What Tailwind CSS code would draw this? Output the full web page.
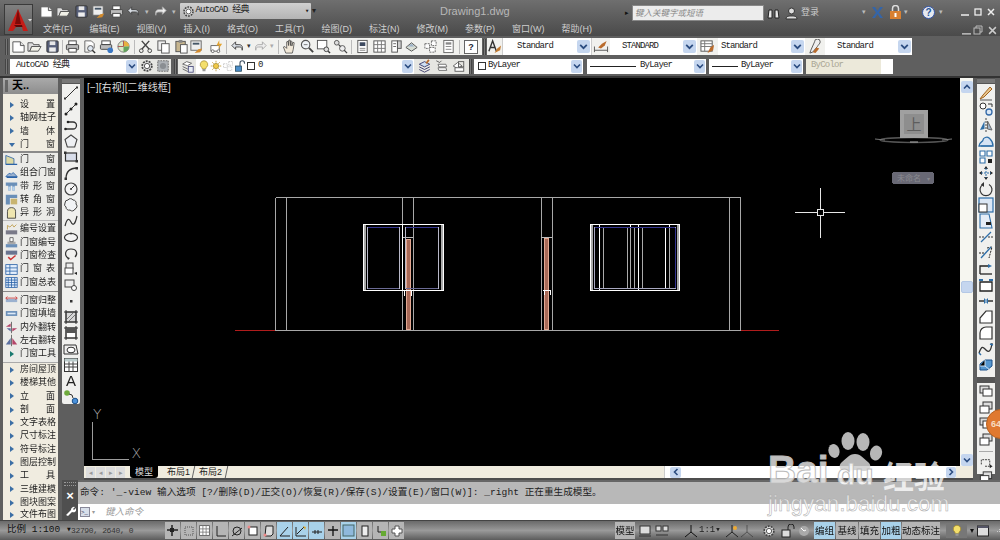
<!DOCTYPE html>
<html><head><meta charset="utf-8"><script src="https://cdn.jsdelivr.net/npm/@tailwindcss/browser@4"></script></head>
<body class="relative w-[1000px] h-[540px] overflow-hidden bg-[#5a5a5a] blur-[.45px] [font-family:'Liberation_Sans','Noto_Sans_CJK_SC',sans-serif]">
<svg class="hidden">
<defs>
<symbol id="new" viewBox="0 0 16 16"><path d="M2 3h8l4 4v7H2z" fill="#fff" stroke="#555"/><path d="M10 3v4h4" fill="#ddd" stroke="#555"/></symbol>
<symbol id="open" viewBox="0 0 16 16"><path d="M1 4h5l1 2h6v2H5l-2 5H1z" fill="#ddd" stroke="#555"/><path d="M5 8h10l-3 5H3z" fill="#f1f1e8" stroke="#555"/></symbol>
<symbol id="save" viewBox="0 0 16 16"><rect x="2" y="2" width="12" height="12" rx="1" fill="#58607a" stroke="#333"/><rect x="5" y="2.500" width="6" height="4" fill="#e8e8e8"/><rect x="4.500" y="9" width="7" height="4.500" fill="#eee"/></symbol>
<symbol id="print" viewBox="0 0 16 16"><rect x="4" y="2" width="8" height="4" fill="#fff" stroke="#444"/><rect x="1.500" y="6" width="13" height="5.500" rx="1" fill="#bbb" stroke="#444"/><rect x="4" y="10" width="8" height="4" fill="#fff" stroke="#444"/></symbol>
<symbol id="preview" viewBox="0 0 16 16"><path d="M3 2h7l3 3v5" fill="#fff" stroke="#666"/><path d="M3 2v12h5" fill="none" stroke="#666"/><circle cx="9" cy="10" r="3" fill="#dfe8f2" stroke="#555"/><path d="M11 12l3 3" stroke="#333" stroke-width="1.500"/></symbol>
<symbol id="publish" viewBox="0 0 16 16"><rect x="3" y="2" width="9" height="4" fill="#fff" stroke="#444"/><rect x="1.500" y="6" width="12" height="5" rx="1" fill="#bbb" stroke="#444"/><circle cx="12" cy="12" r="3" fill="#3b78c4"/></symbol>
<symbol id="d3" viewBox="0 0 16 16"><circle cx="8" cy="8" r="6" fill="#d9e8c8" stroke="#777"/><path d="M8 2a6 6 0 0 1 6 6H8z" fill="#e8b040"/><path d="M8 8h6a6 6 0 0 1-6 6z" fill="#63a35d"/><path d="M2 8h6V2" fill="none" stroke="#a55"/></symbol>
<symbol id="cut" viewBox="0 0 16 16"><path d="M4 2l8 9M12 2l-8 9" stroke="#444" stroke-width="1.500"/><circle cx="3.500" cy="12.500" r="2" fill="none" stroke="#444"/><circle cx="12.500" cy="12.500" r="2" fill="none" stroke="#444"/></symbol>
<symbol id="copy" viewBox="0 0 16 16"><rect x="2" y="2" width="8" height="10" fill="#eee" stroke="#555"/><rect x="6" y="5" width="8" height="10" fill="#fff" stroke="#555"/></symbol>
<symbol id="paste" viewBox="0 0 16 16"><rect x="2" y="2.500" width="10" height="11" fill="#c6b58e" stroke="#555"/><rect x="5" y="1" width="4" height="3" fill="#888"/><rect x="7" y="6" width="7" height="9" fill="#fff" stroke="#555"/></symbol>
<symbol id="brush" viewBox="0 0 16 16"><rect x="2" y="2" width="11" height="10" fill="#eee" stroke="#666"/><rect x="4" y="4" width="7" height="2" fill="#456"/><path d="M6 15l4-4 4-1-2 4z" fill="#d28a2c"/></symbol>
<symbol id="block" viewBox="0 0 16 16"><path d="M2 7h9v6H2z" fill="#fff" stroke="#666"/><circle cx="4" cy="13" r="1.500" fill="#fff" stroke="#666"/><circle cx="10" cy="13" r="1.500" fill="#fff" stroke="#666"/><path d="M11 1l-3 6h3l-1 4 4-6h-3z" fill="#e3a32e"/></symbol>
<symbol id="undo" viewBox="0 0 16 16"><path d="M6 3L2 7l4 4V8.500h4c2 0 3 1 3 3.500 1-4-.5-6-3.500-6H6z" fill="#d8dde4" stroke="#444"/></symbol>
<symbol id="redo" viewBox="0 0 16 16"><path d="M10 3l4 4-4 4V8.500H6c-2 0-3 1-3 3.500-1-4 .5-6 3.500-6H10z" fill="#eee" stroke="#aaa"/></symbol>
<symbol id="pan" viewBox="0 0 16 16"><path d="M4 15L1.500 8.500 3 8l2 2V3l1.500-.5L7 7V1.500L8.500 1 9 7V2l1.500.5V7.500l1-4 1.500.5-1 7-1 4z" fill="#f1e8d8" stroke="#444" stroke-width=".8"/></symbol>
<symbol id="zoom" viewBox="0 0 16 16"><circle cx="6" cy="6" r="4.500" fill="#eef2f6" stroke="#555" stroke-width="1.200"/><path d="M9.500 9.500l4.500 4.500" stroke="#444" stroke-width="2"/><path d="M4 6h4" stroke="#777"/></symbol>
<symbol id="zoomw" viewBox="0 0 16 16"><rect x="1.500" y="1.500" width="10" height="9" fill="#fff" stroke="#555"/><circle cx="11" cy="11" r="2.500" fill="#ddd" stroke="#444"/><path d="M13 13l2 2" stroke="#333" stroke-width="1.500"/></symbol>
<symbol id="zoomp" viewBox="0 0 16 16"><circle cx="4" cy="4" r="2.500" fill="#ddd" stroke="#555"/><circle cx="10" cy="10" r="3" fill="#eee" stroke="#555"/><path d="M6 6l2 2M12 12l3 3" stroke="#444" stroke-width="1.300"/></symbol>
<symbol id="props" viewBox="0 0 16 16"><rect x="3" y="1.500" width="10" height="13" fill="#fff" stroke="#555"/><rect x="5" y="3.500" width="6" height="4" fill="#3e4a60"/><path d="M5 10h6M5 12h6" stroke="#888"/></symbol>
<symbol id="grid" viewBox="0 0 16 16"><rect x="2" y="2" width="12" height="12" fill="#fff" stroke="#555"/><path d="M6 2v12M10 2v12M2 6h12M2 10h12" stroke="#777"/></symbol>
<symbol id="tool" viewBox="0 0 16 16"><rect x="3" y="2" width="6" height="12" fill="#fff" stroke="#555"/><rect x="9" y="2" width="4" height="8" fill="#ccc" stroke="#555"/><path d="M4.500 5h3M4.500 8h3" stroke="#666"/></symbol>
<symbol id="sheet" viewBox="0 0 16 16"><path d="M2 9l6-5 6 5-6 4z" fill="#d7ddd4" stroke="#555"/><path d="M4 8l4-3 3 3" fill="#9db2c8"/></symbol>
<symbol id="mark" viewBox="0 0 16 16"><rect x="2" y="5" width="5" height="5" fill="#fff" stroke="#666" stroke-dasharray="2 1"/><rect x="9" y="2" width="5" height="5" fill="#fff" stroke="#666" stroke-dasharray="2 1"/><rect x="7" y="9" width="6" height="5" fill="#fff" stroke="#666" stroke-dasharray="2 1"/></symbol>
<symbol id="calc" viewBox="0 0 16 16"><rect x="3" y="1.500" width="10" height="13" fill="#fff" stroke="#666"/><rect x="5" y="3.500" width="6" height="2.500" fill="#888"/><path d="M5 8h6M5 11h6" stroke="#888"/></symbol>
<symbol id="txtst" viewBox="0 0 16 16"><path d="M2 13L6 2l4 11M3.500 9h5" fill="none" stroke="#333" stroke-width="1.500"/><path d="M8 15l3-5 4-3-1 5z" fill="#c47b30"/></symbol>
<symbol id="dimst" viewBox="0 0 16 16"><path d="M1 8v6M15 8v6M1 12h14" stroke="#555"/><path d="M5 9l4-4 5-3-2 5-4 3z" fill="#b96b2c"/></symbol>
<symbol id="tabst" viewBox="0 0 16 16"><rect x="1" y="2" width="12" height="11" fill="#fff" stroke="#555"/><path d="M1 5h12M1 8h12M5 2v11" stroke="#777"/><path d="M8 15l3-6 4-3-1 6z" fill="#b96b2c"/></symbol>
<symbol id="mlst" viewBox="0 0 16 16"><path d="M7 3a3 3 0 0 1 6 0c0 2-2 3-3 5l-5 6-3 1 1-3z" fill="#eee" stroke="#555"/><path d="M5 14l4-5 3 1-4 5z" fill="#b96b2c"/></symbol>
<symbol id="lay" viewBox="0 0 16 16"><path d="M2 5l5-3 6 2-5 3z" fill="#fff" stroke="#555"/><path d="M2 8l6 3 5-3M2 11l6 3 5-3" fill="none" stroke="#555"/><rect x="9" y="8" width="6" height="7" fill="#e8eef5" stroke="#447"/></symbol>
<symbol id="lay2" viewBox="0 0 16 16"><path d="M2 6l6-3 6 3-6 3z" fill="#cfe0f3" stroke="#336"/><path d="M2 9l6 3 6-3M2 12l6 3 6-3" fill="none" stroke="#336"/><path d="M10 5l3-4" stroke="#b96b2c" stroke-width="2"/></symbol>
<symbol id="lay3" viewBox="0 0 16 16"><path d="M2 2l4 2 2-2" fill="none" stroke="#555"/><path d="M4 6h9l1 3H5zM4 10h9l1 3H5z" fill="#fff" stroke="#666"/></symbol>
<symbol id="lay4" viewBox="0 0 16 16"><path d="M2 8l5-4 5 4-5 3z" fill="#fff" stroke="#555"/><rect x="8" y="3" width="6" height="6" fill="none" stroke="#555"/><rect x="4" y="10" width="10" height="4" fill="#fff" stroke="#555"/></symbol>
<symbol id="gear" viewBox="0 0 16 16"><circle cx="8" cy="8" r="5.500" fill="#ddd" stroke="#444" stroke-width="2" stroke-dasharray="2.200 1.200"/><circle cx="8" cy="8" r="3" fill="#fff" stroke="#444"/></symbol>
<symbol id="gear2" viewBox="0 0 16 16"><rect x="2" y="2" width="12" height="12" fill="#aeb2b6" stroke="#666" stroke-dasharray="2 1"/><circle cx="8" cy="8" r="3.500" fill="#8a8e92"/></symbol>
<symbol id="bulb" viewBox="0 0 16 16"><path d="M8 1a5 5 0 0 1 3 9l-1 2H6l-1-2a5 5 0 0 1 3-9z" fill="#f4df6c" stroke="#a68c2c"/><rect x="6" y="12" width="4" height="3" fill="#999"/></symbol>
<symbol id="sun" viewBox="0 0 16 16"><circle cx="8" cy="8" r="3.500" fill="#f2c845" stroke="#a68c2c"/><path d="M8 1v2.500M8 12.500V15M1 8h2.500M12.500 8H15M3 3l2 2M11 11l2 2M13 3l-2 2M5 11l-2 2" stroke="#b98f20"/></symbol>
<symbol id="lock" viewBox="0 0 16 16"><rect x="2" y="8" width="8" height="7" fill="#4d8ec9" stroke="#245"/><path d="M8 8V4a3 3 0 0 1 6 0v1" fill="none" stroke="#456" stroke-width="1.500"/></symbol>
<symbol id="dn" viewBox="0 0 10 10"><path d="M2 3.500L5 6.500 8 3.500" fill="none" stroke="#2b4c80" stroke-width="1.600"/></symbol>
<symbol id="ln" viewBox="0 0 16 16"><path d="M2 14L14 2" stroke="#333"/><rect x="1" y="12.500" width="2" height="2" fill="#333"/><rect x="13" y="1.500" width="2" height="2" fill="#333"/></symbol>
<symbol id="ln2" viewBox="0 0 16 16"><path d="M2 14L14 2" stroke="#333"/><circle cx="3" cy="13" r="1.500" fill="#222"/><circle cx="8" cy="8" r="1.500" fill="#222"/><circle cx="13" cy="3" r="1.500" fill="#222"/></symbol>
<symbol id="pl" viewBox="0 0 16 16"><path d="M2 12h8a3 3 0 0 0 0-7H5" fill="none" stroke="#333" stroke-width="1.300"/><circle cx="2.500" cy="12" r="1.300" fill="#222"/><circle cx="5" cy="5" r="1.300" fill="#222"/></symbol>
<symbol id="pg" viewBox="0 0 16 16"><path d="M8 2l6 4.500-2.300 7.500H4.300L2 6.500z" fill="#eef0f3" stroke="#444" stroke-width="1.100"/></symbol>
<symbol id="rc" viewBox="0 0 16 16"><rect x="2.500" y="4" width="11" height="8" fill="#d9deea" stroke="#333" stroke-width="1.200"/><rect x="1" y="2.500" width="2.500" height="2.500" fill="#333"/><rect x="12.500" y="11" width="2.500" height="2.500" fill="#333"/></symbol>
<symbol id="ar" viewBox="0 0 16 16"><path d="M3 14C3 7 7 3 14 3" fill="none" stroke="#333" stroke-width="1.300"/><rect x="1.500" y="12.500" width="2.500" height="2.500" fill="#333"/><rect x="12.500" y="2" width="2.500" height="2.500" fill="#333"/></symbol>
<symbol id="ci" viewBox="0 0 16 16"><circle cx="8" cy="8" r="6" fill="#f3f3f3" stroke="#444" stroke-width="1.200"/><path d="M8 8l3.500-3.500" stroke="#333"/><circle cx="8" cy="8" r="1" fill="#333"/></symbol>
<symbol id="cl" viewBox="0 0 16 16"><path d="M5 3a3 3 0 0 1 5 0 3 3 0 0 1 3 4 3 3 0 0 1-1 5 3 3 0 0 1-5 1 3 3 0 0 1-4-3 3 3 0 0 1-1-4 3 3 0 0 1 3-3z" fill="#f1f3f5" stroke="#444"/></symbol>
<symbol id="sp" viewBox="0 0 16 16"><path d="M2 13C4 5 6 5 8 9s4 3 6-6" fill="none" stroke="#333" stroke-width="1.200"/></symbol>
<symbol id="el" viewBox="0 0 16 16"><ellipse cx="8" cy="8.500" rx="6.500" ry="4" fill="#f4f4f4" stroke="#333" stroke-width="1.200"/><circle cx="8" cy="4.500" r="1" fill="#333"/></symbol>
<symbol id="ea" viewBox="0 0 16 16"><path d="M5 13C1 10 2 4 8 4s7 5 4 8" fill="none" stroke="#333" stroke-width="1.200"/><path d="M4 12l3 1-2 2" fill="#333"/></symbol>
<symbol id="ib" viewBox="0 0 16 16"><rect x="3" y="2" width="7" height="6" fill="#eee" stroke="#444"/><rect x="2" y="7" width="8" height="6" fill="#fff" stroke="#444"/><path d="M11 12l3 2v-3z" fill="#222"/></symbol>
<symbol id="mk" viewBox="0 0 16 16"><rect x="2" y="3" width="9" height="7" fill="#eee" stroke="#444"/><circle cx="11" cy="11" r="2.500" fill="#fff" stroke="#444"/></symbol>
<symbol id="pt" viewBox="0 0 16 16"><rect x="7" y="7" width="2.500" height="2.500" fill="#333"/></symbol>
<symbol id="ht" viewBox="0 0 16 16"><rect x="3" y="3" width="10" height="10" fill="#d7d7d7" stroke="#333"/><path d="M1 3h14M1 13h14M3 1v14M13 1v14" stroke="#333"/><path d="M4 10l6-6M6 12l6-6" stroke="#777"/></symbol>
<symbol id="gr" viewBox="0 0 16 16"><rect x="3" y="3" width="10" height="10" fill="#fff" stroke="#333"/><path d="M1 3h14M1 13h14M3 1v14M13 1v14" stroke="#333"/><rect x="3" y="3" width="10" height="5" fill="#555"/></symbol>
<symbol id="rg" viewBox="0 0 16 16"><path d="M1 4h12l2 9H1z" fill="#eee" stroke="#333"/><ellipse cx="8" cy="9" rx="4" ry="2.800" fill="#fff" stroke="#333"/></symbol>
<symbol id="tb" viewBox="0 0 16 16"><rect x="1.500" y="1.500" width="13" height="13" fill="#fff" stroke="#333"/><rect x="1.500" y="1.500" width="13" height="3" fill="#bcc"/><path d="M1.500 7h13M1.500 10h13M6 4.500v10M10 4.500v10" stroke="#444"/></symbol>
<symbol id="mo" viewBox="0 0 16 16"><circle cx="4" cy="4" r="2.800" fill="#6eaa3c"/><circle cx="12" cy="12" r="2.800" fill="#4a90d9" stroke="#1b4f88"/><path d="M6 5l3 1 1 3" fill="none" stroke="#333"/></symbol>
<symbol id="er" viewBox="0 0 16 16"><path d="M2 14l3-4 7-8 2 2-8 8z" fill="#e8c58d" stroke="#a2641f"/><path d="M2 15h12" stroke="#555"/></symbol>
<symbol id="co" viewBox="0 0 16 16"><circle cx="5" cy="5" r="3" fill="#fff" stroke="#333"/><circle cx="11" cy="11" r="3" fill="#dbe7f5" stroke="#3469a8" stroke-width="1.300"/><path d="M10 3h4v3" fill="none" stroke="#333"/></symbol>
<symbol id="mi" viewBox="0 0 16 16"><path d="M8 1v14" stroke="#444" stroke-dasharray="2 1"/><path d="M6.500 4v8L2 13z" fill="#2e6ea8"/><path d="M9.500 4v8l4.500 1z" fill="#9fb4ca" stroke="#666"/></symbol>
<symbol id="of" viewBox="0 0 16 16"><path d="M1 13c0-4 4-4 4-6s4-4 6-2 4 3 4 8z" fill="#d5e3f4" stroke="#2e6ea8" stroke-width="1.300"/><path d="M3 13h11" stroke="#2e6ea8"/></symbol>
<symbol id="ar2" viewBox="0 0 16 16"><path d="M2 2h5v5H2zM9 2h5v5H9zM2 9h5v5H2z" fill="#fff" stroke="#2e6ea8" stroke-width="1.100"/><rect x="10" y="10" width="4" height="4" fill="#222"/></symbol>
<symbol id="mv" viewBox="0 0 16 16"><path d="M8 1l2 3H6zM8 15l2-3H6zM1 8l3-2v4zM15 8l-3-2v4z" fill="#222"/><path d="M8 3v10M3 8h10" stroke="#2e6ea8" stroke-dasharray="2 1"/></symbol>
<symbol id="ro" viewBox="0 0 16 16"><path d="M11 3.500A6 6 0 1 1 5 3.500" fill="none" stroke="#333" stroke-width="1.200"/><path d="M6 1v5L3 3.500z" fill="#333"/></symbol>
<symbol id="sc" viewBox="0 0 16 16"><rect x="1" y="1" width="14" height="14" fill="#dbe7f5" stroke="#2e6ea8" stroke-width="1.200"/><rect x="1" y="7" width="8" height="8" fill="#fff" stroke="#333"/></symbol>
<symbol id="st" viewBox="0 0 16 16"><path d="M2 1h9l3 14H2z" fill="#e5edf7" stroke="#2e6ea8" stroke-width="1.100"/><rect x="8" y="9" width="5" height="3" fill="#222"/></symbol>
<symbol id="tr" viewBox="0 0 16 16"><path d="M3 13L13 3" stroke="#2e6ea8" stroke-width="1.300"/><path d="M1 8h5M10 8h5" stroke="#333" stroke-dasharray="2 1"/></symbol>
<symbol id="ex" viewBox="0 0 16 16"><path d="M1 8h6M9 3l5-1-3 11" fill="none" stroke="#222" stroke-dasharray="2 1"/><path d="M3 13L13 2" stroke="#2e6ea8" stroke-width="1.300"/></symbol>
<symbol id="bk" viewBox="0 0 16 16"><path d="M2 13V5h9" fill="none" stroke="#222" stroke-width="1.300"/><path d="M2 13h12" stroke="#222" stroke-width="1.300"/><path d="M10 3l4 2-4 2z" fill="#2e6ea8"/></symbol>
<symbol id="bk2" viewBox="0 0 16 16"><path d="M2 5h12v9H2z" fill="#fff" stroke="#222" stroke-width="1.300"/><path d="M1 3h4M11 3h4" stroke="#2e6ea8" stroke-width="2"/></symbol>
<symbol id="jn" viewBox="0 0 16 16"><path d="M1 8h5M10 8h5" stroke="#333" stroke-width="1.500"/><path d="M6 5l3 3-3 3zM10 5L7 8l3 3z" fill="#2e6ea8"/></symbol>
<symbol id="cf" viewBox="0 0 16 16"><path d="M2 14V9l6-7h6v12z" fill="#fff" stroke="#333" stroke-width="1.200"/></symbol>
<symbol id="fl" viewBox="0 0 16 16"><path d="M2 14V8a6 6 0 0 1 6-6h6v12z" fill="#fff" stroke="#333" stroke-width="1.200"/></symbol>
<symbol id="bl" viewBox="0 0 16 16"><path d="M1 12c3-8 4-6 7-3s5 1 6-7" fill="none" stroke="#333" stroke-width="1.300"/><path d="M1 12l2 2M12 3l3 1" stroke="#2e6ea8" stroke-width="1.500"/></symbol>
<symbol id="bx" viewBox="0 0 16 16"><path d="M2 7l5-4h7v6l-5 4H2z" fill="#5596cf" stroke="#1b4f88"/><path d="M7 3v6H2M7 9l5 4" stroke="#cfe2f5"/></symbol>
<symbol id="dr1" viewBox="0 0 16 16"><rect x="2" y="2" width="9" height="7" fill="#ddd" stroke="#333"/><rect x="5" y="5" width="9" height="7" fill="#fff" stroke="#333"/></symbol>
<symbol id="dr2" viewBox="0 0 16 16"><rect x="5" y="2" width="9" height="7" fill="#ddd" stroke="#333"/><rect x="2" y="6" width="9" height="7" fill="#fff" stroke="#333"/></symbol>
<symbol id="abc" viewBox="0 0 16 16"><path d="M3 10V5h9v7h-5" fill="none" stroke="#333" stroke-dasharray="2 1"/><path d="M12 14l3-2-3-2z" fill="#222"/></symbol>
<symbol id="tri" viewBox="0 0 8 8"><path d="M2 1l4 3-4 3z" fill="#3b6ea5"/></symbol>
<symbol id="trg" viewBox="0 0 8 8"><path d="M2 1l4 3-4 3z" fill="#1a7a70"/></symbol>
<symbol id="dr" viewBox="0 0 16 16"><path d="M1 14V3l10 4v7z" fill="#ddd9a4" stroke="#2a62a8"/><path d="M1 14h14" stroke="#2a62a8" stroke-width="1.500"/></symbol>
<symbol id="dr3" viewBox="0 0 16 16"><path d="M1 13l4-4 3 1 2-2 5 5z" fill="#9bb1cf" stroke="#2a62a8"/><path d="M2 14h13" stroke="#2a62a8" stroke-width="1.500"/></symbol>
<symbol id="bar" viewBox="0 0 16 16"><path d="M1 3h14v4h-3v6H9V7H7v6H4V7H1z" fill="#6a8fb8"/><path d="M4 8h3v5H4zM9 8h3v5H9z" fill="#b8d3ec"/></symbol>
<symbol id="cor" viewBox="0 0 16 16"><path d="M1 2h14v4H6v8H1z" fill="#6a8fb8"/><path d="M7 7h8v7H7z" fill="#c8b470"/></symbol>
<symbol id="arc" viewBox="0 0 16 16"><path d="M3 15V7a5 5 0 0 1 10 0v8z" fill="#efe6b0" stroke="#333"/></symbol>
<symbol id="num" viewBox="0 0 16 16"><rect x="1" y="9" width="14" height="5" fill="#7a7a88"/><path d="M3 8V3l3 2 3-3 2 3 3-3" fill="none" stroke="#b94"/></symbol>
<symbol id="nu2" viewBox="0 0 16 16"><rect x="1" y="10" width="14" height="4" fill="#6a8fb8"/><rect x="3" y="7" width="10" height="3" fill="#aaa"/><path d="M6 2h4v5H6z" fill="#fff" stroke="#555"/></symbol>
<symbol id="chk" viewBox="0 0 16 16"><rect x="1" y="2" width="14" height="5" fill="#6a7590"/><path d="M4 10l3 3 6-5" fill="none" stroke="#c33" stroke-width="1.800"/></symbol>
<symbol id="tbb" viewBox="0 0 16 16"><rect x="1" y="2" width="14" height="12" fill="#e3eefb" stroke="#2a62a8"/><path d="M1 6h14M1 10h14M6 2v12" stroke="#2a62a8"/></symbol>
<symbol id="tbc" viewBox="0 0 16 16"><rect x="1" y="2" width="14" height="12" fill="#e3eefb" stroke="#2a62a8"/><path d="M1 5h14M1 8h14M1 11h14M4 2v12M8 2v12M12 2v12" stroke="#2a62a8"/></symbol>
<symbol id="fx" viewBox="0 0 16 16"><path d="M1 6h14v4H1z" fill="#9bb1cf"/><path d="M3 3L1 5l2 2M13 3l2 2-2 2M1 5h14" fill="none" stroke="#c33"/></symbol>
<symbol id="fl2" viewBox="0 0 16 16"><rect x="1" y="5" width="14" height="6" fill="#6a8fb8"/><rect x="3" y="7" width="10" height="2" fill="#dce9f7"/></symbol>
<symbol id="sw" viewBox="0 0 16 16"><path d="M8 1v14" stroke="#555"/><path d="M7 3L1 7h6zM9 9h6l-6 4z" fill="#b5476a"/><path d="M7 9H2l5 4z" fill="#5a6fa0"/></symbol>
<symbol id="sw2" viewBox="0 0 16 16"><path d="M8 1v14" stroke="#555"/><path d="M7 5l-6 8h6z" fill="#5a6fa0"/><path d="M9 5l6 8H9z" fill="#b5476a"/></symbol>
</defs>
</svg>

<!-- Title -->
<header class="h-[36px] bg-gradient-to-b from-[#6f6f6f] via-[#5c5c5c] to-[#4a4a4a] flex relative">
  <div class="w-[29px] h-[31px] ml-[4px] mt-[4px] bg-gradient-to-b from-[#808080] to-[#5c5c5c] border border-[#3a3a3a] flex items-center pl-[2px]">
    <svg class="w-[21px] h-[24px]" viewBox="0 0 21 24"><path d="M11 1L1 23h5l3-4h6l1 4h5z" fill="#c41d18"/><path d="M11 1l3 15H8z" fill="#7c0a08"/><path d="M7 17h8l.5 2H9z" fill="#5f0806"/></svg>
    <svg class="w-[4px] h-[4px]" viewBox="0 0 8 8"><path d="M0 2h8L4 7z" fill="#ddd"/></svg>
  </div>
  <div class="flex flex-col">
    <div class="h-[20px] flex items-center pt-[2px]">
      <div class="flex ml-[5.500px] gap-[2.500px]">
        <svg class="w-[15px] h-[15px]"><use href="#new"/></svg><svg class="w-[15px] h-[15px]"><use href="#open"/></svg><svg class="w-[15px] h-[15px]"><use href="#save"/></svg><svg class="w-[15px] h-[15px]"><use href="#brush"/></svg><svg class="w-[15px] h-[15px]"><use href="#print"/></svg><svg class="w-[15px] h-[15px]"><use href="#undo"/></svg>
        <span class="text-[7px] text-[#bbb] leading-[15px] w-[7px] text-center">▾</span><svg class="w-[15px] h-[15px]"><use href="#redo"/></svg><span class="text-[7px] text-[#bbb] leading-[15px] w-[7px] text-center">▾</span>
      </div>
      <div class="w-[131px] h-[16px] ml-[2px] bg-gradient-to-b from-[#d0d0d0] to-[#b4b4b4] rounded-[1px] flex items-center pl-[2px] [font-family:'Liberation_Mono','Noto_Sans_CJK_SC',monospace] text-[9px] tracking-[-.8px] text-[#222] whitespace-nowrap">
        <svg class="w-[13px] h-[13px] mr-[1px]"><use href="#gear"/></svg><span>AutoCAD 经典</span><span class="ml-auto mr-[2px] text-[7px]">▾</span>
      </div>
      <span class="text-[8px] text-[#222] ml-[1px]">▾</span>
    </div>
    <nav class="h-[16px] pt-[3px] flex items-center gap-[17px] ml-[10px] text-[9px] text-[#cfcfcf] whitespace-nowrap">
      <span>文件(F)</span><span>编辑(E)</span><span>视图(V)</span><span>插入(I)</span><span>格式(O)</span><span>工具(T)</span><span>绘图(D)</span><span>标注(N)</span><span>修改(M)</span><span>参数(P)</span><span>窗口(W)</span><span>帮助(H)</span>
    </nav>
  </div>
  <span class="absolute left-[440px] top-[3px] text-[11px] text-[#b8b8b8]">Drawing1.dwg</span>
  <div class="absolute left-[625px] top-[5px] h-[16px] flex items-center text-[9px]">
    <span class="text-[7px] text-[#111] w-[7px]">▸</span>
    <div class="w-[132px] h-[16px] bg-[#ececec] border border-[#888] pl-[2px] text-[8.500px] leading-[14px] italic text-[#888]">键入关键字或短语</div>
    <svg class="w-[13px] h-[13px] ml-[3px]" viewBox="0 0 13 13"><path d="M2 3h3v8H1zM8 3h3l1 8H8z" fill="#e8e8e8" stroke="#222"/></svg>
    <svg class="w-[13px] h-[13px] ml-[5px]" viewBox="0 0 13 13"><circle cx="6.500" cy="4" r="3" fill="#ddd" stroke="#333"/><path d="M1 12c0-3 3-3 5.500-3s5.500 0 5.500 3z" fill="#ddd" stroke="#333"/></svg>
    <span class="ml-[3px] text-[#ccc]">登录</span>
  </div>
  <div class="absolute left-[862px] top-[4px] h-[16px] flex items-center">
    <span class="text-[7px] text-[#bbb] mr-[5px]">▾</span>
    <svg class="w-[13px] h-[13px]" viewBox="0 0 13 13"><path d="M1 1h3l2.500 4L9 1h3L8 6.500l4 5.500H9L6.500 8 4 12H1l4-5.500z" fill="#3465a8"/></svg>
    <svg class="w-[13px] h-[14px] ml-[5px]" viewBox="0 0 13 14"><rect x="1" y="6" width="11" height="8" fill="#d88032"/><path d="M3.500 6V3.500a3 3 0 0 1 6 0V6" fill="none" stroke="#ddd" stroke-width="1.500"/><path d="M6.500 8v4" stroke="#fff" stroke-width="2"/></svg>
    <span class="text-[7px] text-[#bbb] ml-[2px]">▾</span>
    <svg class="w-[13px] h-[13px] ml-[14px]" viewBox="0 0 13 13"><circle cx="6.500" cy="6.500" r="6" fill="#e6e9ef" stroke="#35a"/><text x="6.500" y="10" text-anchor="middle" font-size="10" font-weight="700" fill="#24579c">?</text></svg>
    <span class="text-[7px] text-[#bbb] ml-[4px]">▾</span>
    <svg class="w-[8px] h-[8px] ml-[18px]" viewBox="0 0 8 8"><path d="M0 7h8" stroke="#eee" stroke-width="1.500"/></svg>
    <svg class="w-[8px] h-[8px] ml-[5px]" viewBox="0 0 8 8"><rect x="1" y="1" width="6" height="6" fill="none" stroke="#eee" stroke-width="1.300"/></svg>
    <svg class="w-[8px] h-[8px] ml-[5px]" viewBox="0 0 8 8"><path d="M1 1l6 6M7 1L1 7" stroke="#eee" stroke-width="1.500"/></svg>
  </div>
  <div class="absolute left-[962px] top-[25px] h-[10px] flex items-center gap-[2px]">
    <svg class="w-[9px] h-[9px]" viewBox="0 0 8 8"><path d="M0 7h8" stroke="#ccc" stroke-width="1.200"/></svg>
    <svg class="w-[10px] h-[10px]" viewBox="0 0 10 10"><rect x="1" y="3" width="6" height="6" fill="none" stroke="#bbb"/><path d="M3 3V1h6v6H7" fill="none" stroke="#bbb"/></svg>
    <svg class="w-[9px] h-[9px] ml-[3px]" viewBox="0 0 8 8"><path d="M1 1l6 6M7 1L1 7" stroke="#ccc" stroke-width="1.300"/></svg>
  </div>
</header>

<!-- Toolbars -->
<section class="h-[42px] bg-[#5f5f5f] flex flex-col">
  <div class="h-[21px] flex items-center pl-[5px]">
    <i class="w-[3px] h-[16px] bg-[#777] border-x border-[#444] mr-[2px]"></i>
    <div class="w-[472px] h-[17px] bg-[#f1f1ee] flex items-center pl-[1px]">
      <svg class="w-[15px] h-[15px]"><use href="#new"/></svg><svg class="w-[15px] h-[15px] ml-[1px]"><use href="#open"/></svg><svg class="w-[15px] h-[15px] ml-[3px]"><use href="#save"/></svg>
      <i class="w-px h-[14px] bg-[#bbb] ml-[2px] mr-[2px]"></i>
      <svg class="w-[15px] h-[15px]"><use href="#print"/></svg><svg class="w-[15px] h-[15px] ml-[2px]"><use href="#preview"/></svg><svg class="w-[15px] h-[15px] ml-[2px]"><use href="#publish"/></svg><svg class="w-[15px] h-[15px] ml-[2px]"><use href="#d3"/></svg>
      <i class="w-px h-[14px] bg-[#bbb] ml-[3px] mr-[3px]"></i>
      <svg class="w-[15px] h-[15px]"><use href="#cut"/></svg><svg class="w-[15px] h-[15px] ml-[3px]"><use href="#copy"/></svg><svg class="w-[15px] h-[15px] ml-[3px]"><use href="#paste"/></svg><svg class="w-[15px] h-[15px]"><use href="#brush"/></svg><svg class="w-[15px] h-[15px] ml-[5px]"><use href="#block"/></svg>
      <i class="w-px h-[14px] bg-[#bbb] ml-[2px] mr-[3px]"></i>
      <svg class="w-[15px] h-[15px]"><use href="#undo"/></svg><span class="text-[7px] text-[#333] w-[8px] text-center">▾</span><svg class="w-[15px] h-[15px]"><use href="#redo"/></svg><span class="text-[7px] text-[#aaa] w-[8px] text-center">▾</span>
      <i class="w-px h-[14px] bg-[#bbb] ml-[2px] mr-[3px]"></i>
      <svg class="w-[15px] h-[15px]"><use href="#pan"/></svg><svg class="w-[15px] h-[15px] ml-[3px]"><use href="#zoom"/></svg><svg class="w-[15px] h-[15px] ml-[1px]"><use href="#zoomw"/></svg><svg class="w-[15px] h-[15px] ml-[2px]"><use href="#zoomp"/></svg>
      <i class="w-px h-[14px] bg-[#bbb] ml-[3px] mr-[3px]"></i>
      <svg class="w-[15px] h-[15px]"><use href="#props"/></svg><svg class="w-[15px] h-[15px] ml-[2px]"><use href="#grid"/></svg><svg class="w-[15px] h-[15px] ml-[2px]"><use href="#tool"/></svg><svg class="w-[15px] h-[15px]"><use href="#sheet"/></svg><svg class="w-[15px] h-[15px] ml-[4px]"><use href="#mark"/></svg><svg class="w-[15px] h-[15px] ml-[3px]"><use href="#calc"/></svg>
      <i class="w-px h-[14px] bg-[#bbb] ml-[3px] mr-[4px]"></i>
      <span class="relative w-[14px] h-[14px] bg-white border border-[#666] text-center text-[9px] leading-[12px] font-bold text-[#223]">?</span>
    </div>
    <i class="w-[3px] h-[16px] bg-[#777] border-x border-[#444] mx-[1px]"></i>
    <div class="h-[17px] flex items-center bg-[#f1f1ee] [font-family:'Liberation_Mono',monospace] text-[9px] tracking-[-.9px] text-[#222]">
      <svg class="w-[15px] h-[15px]"><use href="#txtst"/></svg>
      <div class="w-[90px] h-[17px] bg-white border-x border-[#ccc] flex items-center pl-[14px]"><span>Standard</span><i class="ml-auto mr-[1px] w-[13px] h-[13px] bg-[#c5d6ef] rounded-[2px] flex items-center justify-center"><svg class="w-[11px] h-[11px]"><use href="#dn"/></svg></i></div>
      <i class="w-[18px] h-[17px] flex items-center justify-center"><svg class="w-[16px] h-[15px]"><use href="#dimst"/></svg></i>
      <div class="w-[87px] h-[17px] bg-white flex items-center pl-[12px]"><span>STANDARD</span><i class="ml-auto mr-[1px] w-[13px] h-[13px] bg-[#c5d6ef] rounded-[2px] flex items-center justify-center"><svg class="w-[11px] h-[11px]"><use href="#dn"/></svg></i></div>
      <i class="w-[21px] h-[17px] flex items-center justify-center"><svg class="w-[15px] h-[15px]"><use href="#tabst"/></svg></i>
      <div class="w-[87px] h-[17px] bg-white flex items-center pl-[3px]"><span>Standard</span><i class="ml-auto mr-[1px] w-[13px] h-[13px] bg-[#c5d6ef] rounded-[2px] flex items-center justify-center"><svg class="w-[11px] h-[11px]"><use href="#dn"/></svg></i></div>
      <i class="w-[20px] h-[17px] flex items-center justify-center"><svg class="w-[15px] h-[15px]"><use href="#mlst"/></svg></i>
      <div class="w-[87px] h-[17px] bg-white flex items-center pl-[12px]"><span>Standard</span><i class="ml-auto mr-[1px] w-[13px] h-[13px] bg-[#c5d6ef] rounded-[2px] flex items-center justify-center"><svg class="w-[11px] h-[11px]"><use href="#dn"/></svg></i></div>
    </div>
  </div>
  <div class="h-[18px] flex items-center pl-[5px] [font-family:'Liberation_Mono','Noto_Sans_CJK_SC',monospace] text-[9px] tracking-[-.8px] text-[#222]">
    <i class="w-[3px] h-[15px] bg-[#777] border-x border-[#444] mr-[2px]"></i>
    <div class="w-[128px] h-[15px] bg-white flex items-center pl-[6px]"><span>AutoCAD 经典</span><i class="ml-auto mr-[1px] w-[11px] h-[13px] bg-[#c5d6ef] rounded-[2px] flex items-center justify-center"><svg class="w-[10px] h-[10px]"><use href="#dn"/></svg></i></div>
    <div class="w-[33px] h-[15px] bg-[#e6e6e2] flex items-center pl-[2px] gap-[2px]"><svg class="w-[14px] h-[14px]"><use href="#gear"/></svg><svg class="w-[14px] h-[14px]"><use href="#gear2"/></svg></div>
    <i class="w-[3px] h-[15px] bg-[#777] border-x border-[#444] ml-[3px] mr-[1px]"></i>
    <div class="w-[18px] h-[15px] bg-[#e6e6e2] flex items-center justify-center"><svg class="w-[13px] h-[13px]"><use href="#lay"/></svg></div>
    <div class="w-[218px] h-[15px] bg-white flex items-center pl-[2px]"><svg class="w-[12px] h-[12px]"><use href="#bulb"/></svg><svg class="w-[12px] h-[12px]"><use href="#sun"/></svg><svg class="w-[12px] h-[12px] opacity-40"><use href="#mark"/></svg><svg class="w-[12px] h-[12px]"><use href="#lock"/></svg><i class="w-[8px] h-[8px] border border-[#333] ml-[1px] mr-[3px]"></i><span>0</span><i class="ml-auto mr-[1px] w-[11px] h-[13px] bg-[#c5d6ef] rounded-[2px] flex items-center justify-center"><svg class="w-[10px] h-[10px]"><use href="#dn"/></svg></i></div>
    <div class="w-[55px] h-[15px] bg-[#e6e6e2] flex items-center pl-[3px] gap-[2px]"><svg class="w-[15px] h-[14px]"><use href="#lay2"/></svg><svg class="w-[15px] h-[14px]"><use href="#lay3"/></svg><svg class="w-[15px] h-[14px]"><use href="#lay4"/></svg></div>
    <i class="w-[3px] h-[15px] bg-[#777] border-x border-[#444] mr-[1px]"></i>
    <div class="w-[109px] h-[15px] bg-white flex items-center pl-[4px] ml-[1px]"><i class="w-[8px] h-[8px] border border-[#333] mr-[2px]"></i><span>ByLayer</span><i class="ml-auto mr-[1px] w-[11px] h-[13px] bg-[#c5d6ef] rounded-[2px] flex items-center justify-center"><svg class="w-[10px] h-[10px]"><use href="#dn"/></svg></i></div>
    <i class="w-[4px]"></i>
    <div class="w-[119px] h-[15px] bg-white flex items-center pl-[3px]"><i class="w-[46px] h-px bg-[#222] mr-[4px]"></i><span>ByLayer</span><i class="ml-auto mr-[1px] w-[11px] h-[13px] bg-[#c5d6ef] rounded-[2px] flex items-center justify-center"><svg class="w-[10px] h-[10px]"><use href="#dn"/></svg></i></div>
    <i class="w-[3px]"></i>
    <div class="w-[94px] h-[15px] bg-white flex items-center pl-[3px]"><i class="w-[26px] h-px bg-[#222] mr-[3px]"></i><span>ByLayer</span><i class="ml-auto mr-[1px] w-[11px] h-[13px] bg-[#c5d6ef] rounded-[2px] flex items-center justify-center"><svg class="w-[10px] h-[10px]"><use href="#dn"/></svg></i></div>
    <i class="w-[3px]"></i>
    <div class="w-[87px] h-[15px] bg-[#ece9da] flex items-center pl-[5px] text-[#aaa695] border-r-[12px] border-white"><span>ByColor</span></div>
  </div>
  <div class="mt-auto h-[2px] bg-[#333]"></div>
</section>

<main class="h-[442px] flex">
  <!-- Palette -->
  <aside class="w-[62px] h-[442px] bg-[#5e5e5e] pl-[3px] pr-[4px] overflow-hidden text-[9px] whitespace-nowrap text-[#222] leading-[13.300px]">
    <div class="h-[16px] bg-gradient-to-b from-[#aaa] to-[#8d8d8d] font-bold text-[11px] text-black flex items-center pl-[2px]"><i class="w-[3px] h-[12px] bg-[#666] mr-[4px]"></i>天..</div>
    <div class="h-[57px] bg-[#f0ece0] pt-[4px]">
      <div class="flex items-center h-[13.300px]"><svg class="w-[8px] h-[8px] ml-[5px] mr-[4px]"><use href="#tri"/></svg><span class="flex-1 flex justify-between pr-[3px]"><span>设</span><span>置</span></span></div>
      <div class="flex items-center h-[13.300px]"><svg class="w-[8px] h-[8px] ml-[5px] mr-[4px]"><use href="#tri"/></svg><span>轴网柱子</span></div>
      <div class="flex items-center h-[13.300px]"><svg class="w-[8px] h-[8px] ml-[5px] mr-[4px]"><use href="#tri"/></svg><span class="flex-1 flex justify-between pr-[3px]"><span>墙</span><span>体</span></span></div>
      <div class="flex items-center h-[13.300px]"><svg class="w-[8px] h-[8px] ml-[5px] mr-[4px] rotate-90"><use href="#tri"/></svg><span class="flex-1 flex justify-between pr-[3px]"><span>门</span><span>窗</span></span></div>
    </div>
    <div class="h-[211px] bg-[#ebebe8] border-t-2 border-[#8a8a8a]">
      <div class="flex items-center h-[13.300px]"><svg class="w-[13px] h-[13px] ml-[2px] mr-[2px]"><use href="#dr"/></svg><span class="flex-1 flex justify-between pr-[3px]"><span>门</span><span>窗</span></span></div>
      <div class="flex items-center h-[13.300px]"><svg class="w-[13px] h-[13px] ml-[2px] mr-[2px]"><use href="#dr3"/></svg><span>组合门窗</span></div>
      <div class="flex items-center h-[13.300px]"><svg class="w-[13px] h-[13px] ml-[2px] mr-[2px]"><use href="#bar"/></svg><span class="flex-1 flex justify-between pr-[3px]"><span>带</span><span>形</span><span>窗</span></span></div>
      <div class="flex items-center h-[13.300px]"><svg class="w-[13px] h-[13px] ml-[2px] mr-[2px]"><use href="#cor"/></svg><span class="flex-1 flex justify-between pr-[3px]"><span>转</span><span>角</span><span>窗</span></span></div>
      <div class="flex items-center h-[13.300px]"><svg class="w-[13px] h-[13px] ml-[2px] mr-[2px]"><use href="#arc"/></svg><span class="flex-1 flex justify-between pr-[3px]"><span>异</span><span>形</span><span>洞</span></span></div>
      <div class="h-px bg-[#bbb] my-[1px]"></div>
      <div class="flex items-center h-[13.300px]"><svg class="w-[13px] h-[13px] ml-[2px] mr-[2px]"><use href="#num"/></svg><span>编号设置</span></div>
      <div class="flex items-center h-[13.300px]"><svg class="w-[13px] h-[13px] ml-[2px] mr-[2px]"><use href="#nu2"/></svg><span>门窗编号</span></div>
      <div class="flex items-center h-[13.300px]"><svg class="w-[13px] h-[13px] ml-[2px] mr-[2px]"><use href="#chk"/></svg><span>门窗检查</span></div>
      <div class="flex items-center h-[13.300px]"><svg class="w-[13px] h-[13px] ml-[2px] mr-[2px]"><use href="#tbb"/></svg><span class="flex-1 flex justify-between pr-[3px]"><span>门</span><span>窗</span><span>表</span></span></div>
      <div class="flex items-center h-[13.300px]"><svg class="w-[13px] h-[13px] ml-[2px] mr-[2px]"><use href="#tbc"/></svg><span>门窗总表</span></div>
      <div class="h-px bg-[#888] my-[2px]"></div>
      <div class="flex items-center h-[13.300px]"><svg class="w-[13px] h-[13px] ml-[2px] mr-[2px]"><use href="#fx"/></svg><span>门窗归整</span></div>
      <div class="flex items-center h-[13.300px]"><svg class="w-[13px] h-[13px] ml-[2px] mr-[2px]"><use href="#fl2"/></svg><span>门窗填墙</span></div>
      <div class="flex items-center h-[13.300px]"><svg class="w-[13px] h-[13px] ml-[2px] mr-[2px]"><use href="#sw"/></svg><span>内外翻转</span></div>
      <div class="flex items-center h-[13.300px]"><svg class="w-[13px] h-[13px] ml-[2px] mr-[2px]"><use href="#sw2"/></svg><span>左右翻转</span></div>
      <div class="flex items-center h-[13.300px]"><svg class="w-[8px] h-[8px] ml-[5px] mr-[4px]"><use href="#trg"/></svg><span>门窗工具</span></div>
    </div>
    <div class="h-[158px] bg-[#f0ece0] border-t border-[#aaa]">
      <div class="flex items-center h-[13.300px]"><svg class="w-[8px] h-[8px] ml-[5px] mr-[4px]"><use href="#tri"/></svg><span>房间屋顶</span></div>
      <div class="flex items-center h-[13.300px]"><svg class="w-[8px] h-[8px] ml-[5px] mr-[4px]"><use href="#tri"/></svg><span>楼梯其他</span></div>
      <div class="flex items-center h-[13.300px]"><svg class="w-[8px] h-[8px] ml-[5px] mr-[4px]"><use href="#tri"/></svg><span class="flex-1 flex justify-between pr-[3px]"><span>立</span><span>面</span></span></div>
      <div class="flex items-center h-[13.300px]"><svg class="w-[8px] h-[8px] ml-[5px] mr-[4px]"><use href="#tri"/></svg><span class="flex-1 flex justify-between pr-[3px]"><span>剖</span><span>面</span></span></div>
      <div class="flex items-center h-[13.300px]"><svg class="w-[8px] h-[8px] ml-[5px] mr-[4px]"><use href="#tri"/></svg><span>文字表格</span></div>
      <div class="flex items-center h-[13.300px]"><svg class="w-[8px] h-[8px] ml-[5px] mr-[4px]"><use href="#tri"/></svg><span>尺寸标注</span></div>
      <div class="flex items-center h-[13.300px]"><svg class="w-[8px] h-[8px] ml-[5px] mr-[4px]"><use href="#tri"/></svg><span>符号标注</span></div>
      <div class="flex items-center h-[13.300px]"><svg class="w-[8px] h-[8px] ml-[5px] mr-[4px]"><use href="#tri"/></svg><span>图层控制</span></div>
      <div class="flex items-center h-[13.300px]"><svg class="w-[8px] h-[8px] ml-[5px] mr-[4px]"><use href="#tri"/></svg><span class="flex-1 flex justify-between pr-[3px]"><span>工</span><span>具</span></span></div>
      <div class="flex items-center h-[13.300px]"><svg class="w-[8px] h-[8px] ml-[5px] mr-[4px]"><use href="#tri"/></svg><span>三维建模</span></div>
      <div class="flex items-center h-[13.300px]"><svg class="w-[8px] h-[8px] ml-[5px] mr-[4px]"><use href="#tri"/></svg><span>图块图案</span></div>
      <div class="flex items-center h-[11px] overflow-hidden"><svg class="w-[8px] h-[8px] ml-[5px] mr-[4px]"><use href="#tri"/></svg><span>文件布图</span></div>
    </div>
  </aside>

  <div class="w-[938px] flex flex-col">
    <div class="h-[402px] flex">
      <!-- left tools -->
      <div class="w-[22px] bg-[#5e5e5e]">
        <div class="w-[18px] h-[326px] bg-[#f0f0ee] rounded-b-[2px]">
          <div class="h-[6px] bg-[#777] border-y border-[#555]"></div>
          <div class="flex flex-col items-center pt-[1px]">
            <svg class="w-[16px] h-[16px]"><use href="#ln"/></svg><svg class="w-[16px] h-[16px]"><use href="#ln2"/></svg><svg class="w-[16px] h-[16px]"><use href="#pl"/></svg><svg class="w-[16px] h-[16px]"><use href="#pg"/></svg><svg class="w-[16px] h-[16px]"><use href="#rc"/></svg><svg class="w-[16px] h-[16px]"><use href="#ar"/></svg><svg class="w-[16px] h-[16px]"><use href="#ci"/></svg><svg class="w-[16px] h-[16px]"><use href="#cl"/></svg><svg class="w-[16px] h-[16px]"><use href="#sp"/></svg><svg class="w-[16px] h-[16px]"><use href="#el"/></svg><svg class="w-[16px] h-[16px]"><use href="#ea"/></svg><svg class="w-[16px] h-[16px]"><use href="#ib"/></svg><svg class="w-[16px] h-[16px]"><use href="#mk"/></svg><svg class="w-[16px] h-[16px]"><use href="#pt"/></svg><svg class="w-[16px] h-[16px]"><use href="#ht"/></svg><svg class="w-[16px] h-[16px]"><use href="#gr"/></svg><svg class="w-[16px] h-[16px]"><use href="#rg"/></svg><svg class="w-[16px] h-[16px]"><use href="#tb"/></svg>
            <span class="w-[16px] h-[16px] text-[15px] leading-[16px] text-center text-[#222]">A</span><svg class="w-[16px] h-[16px]"><use href="#mo"/></svg>
          </div>
        </div>
      </div>

      <!-- canvas + tabs -->
      <div class="w-[889px] flex flex-col">
        <div class="h-[388px] flex">
          <div class="w-[876px] h-[388px] bg-black relative">
            <svg class="w-[876px] h-[388px]" viewBox="84 78 876 388" shape-rendering="crispEdges">
              <g fill="none" stroke="#a8a8a8">
                <path d="M275.500 197.500h465M275.500 197.500v133M740.500 197.500v133M286.500 197.500v133M729.500 197.500v133M402.500 197.500v133M413.500 197.500v133M541.500 197.500v133M552.500 197.500v133M235 330.500h544"/>
              </g>
              <path d="M235 330.500h40M741 330.500h38" stroke="#b01c1c"/>
              <g stroke="#e2a892" fill="#a86a58"><rect x="406.500" y="239.500" width="4" height="90"/><rect x="544.500" y="238.500" width="4" height="91"/></g>
              <g fill="none" stroke="#bbb"><path d="M403 237.500h10M541 237.500h11"/></g>
              <path d="M365 225v65M442 225v65M592 225v65M678 225v65" stroke="#aaa" stroke-width="2"/>
              <g fill="none" stroke="#fff"><rect x="363.500" y="224.500" width="80" height="66"/><path d="M402.500 224.500v66M404.500 291v5M411.500 291v5M543 290.500h8M544 290v5M550 290v5"/></g>
              <g fill="none" stroke="#b8b8c8"><rect x="367.500" y="227.500" width="32" height="61"/><rect x="405.500" y="227.500" width="33" height="61"/></g>
              <path d="M368 227.500h31M406 227.500h32" stroke="#343490"/>
              <path d="M368 288.500h31M406 288.500h32" stroke="#6a6a94"/>
              <g fill="none" stroke="#fff"><rect x="590.500" y="224.500" width="89" height="66"/><path d="M599.500 224.500v66M638.500 224.500v66M630.500 224.500v3M669.500 224.500v3M665.500 227v61"/></g>
              <g fill="none" stroke="#aaa"><path d="M603.500 227v61M627.500 227v61M630.500 227v61M634.500 227v61M642.500 227v61M669.500 227v61"/></g>
              <rect x="594.500" y="227.500" width="81" height="61" fill="none" stroke="#a8a8c0"/>
              <path d="M595 227.500h80M675.500 228v60" stroke="#343490"/>
              <g stroke="#e6e6e6"><path d="M795 212.500h50M820.500 188v50"/><rect x="817.500" y="209.500" width="6" height="6" fill="#000"/></g>
              <path d="M92.500 422v37.500H129" fill="none" stroke="#9c9c9c"/>
              <text x="93" y="419" font-size="14" fill="#a8a8a8" font-family="DejaVu Sans" font-weight="200">Y</text>
              <text x="131.500" y="458" font-size="14" fill="#a8a8a8" font-family="DejaVu Sans" font-weight="200">X</text>
              <g shape-rendering="auto"><ellipse cx="914" cy="140" rx="34" ry="2.500" fill="none" stroke="#555" stroke-width="1.300"/><path d="M875 139l10 1M942 140l10-1" stroke="#777"/><path d="M910 142h8" stroke="#aaa"/></g>
              <rect x="900" y="110" width="28" height="28" fill="#a0a0a0"/>
              <rect x="904" y="114" width="20" height="20" fill="#8e8e8e"/>
              <text x="914" y="130" text-anchor="middle" font-size="15" fill="#5d5d5d" font-family="Noto Sans CJK SC">上</text>
              <rect x="892" y="172" width="42" height="12" rx="3" fill="#686874"/>
              <text x="909" y="181" text-anchor="middle" font-size="8" fill="#8a8a90" font-family="Noto Sans CJK SC">未命名</text>
              <text x="927" y="181" font-size="6" fill="#8a8a90">▾</text>
            </svg>
            <span class="absolute left-[3px] top-[4px] text-[10px] leading-[12px] tracking-[.1px] text-[#ddd]">[−][右视][二维线框]</span>
          </div>
          <div class="w-[13px] h-[388px] bg-[#f6f6f0] flex flex-col items-center pt-[3px]">
            <i class="w-[12px] h-[12px] bg-[#c5d6ef] rounded-[2px] flex items-center justify-center"><svg class="w-[10px] h-[10px] rotate-180"><use href="#dn"/></svg></i>
            <i class="w-[12px] h-[12px] bg-[#c5d6ef] rounded-[2px] mt-[188px] border border-[#b4c8e6]"></i>
            <i class="w-[12px] h-[12px] bg-[#c5d6ef] rounded-[2px] mt-[161px] flex items-center justify-center"><svg class="w-[10px] h-[10px]"><use href="#dn"/></svg></i>
          </div>
        </div>
        <div class="h-[14px] bg-[#f0ecdf] flex items-center text-[9px] text-[#222] border-b-[2px] border-[#4d4d4d]">
          <div class="flex w-[44px] pl-[2px] gap-[1px]">
            <i class="w-[9px] h-[11px] bg-[#ddd] text-[7px] text-[#999] leading-[11px] text-center not-italic">◂</i><i class="w-[9px] h-[11px] bg-[#ddd] text-[7px] text-[#999] leading-[11px] text-center not-italic">◂</i><i class="w-[9px] h-[11px] bg-[#ddd] text-[7px] text-[#999] leading-[11px] text-center not-italic">▸</i><i class="w-[9px] h-[11px] bg-[#ddd] text-[7px] text-[#999] leading-[11px] text-center not-italic">▸</i>
          </div>
          <span class="w-[28px] h-[12px] bg-black text-[#ddd] text-center leading-[12px] ml-[2px] rounded-b-[3px]">模型</span>
          <span class="ml-[6px] w-[30px] leading-[12px] text-center border-r border-[#666] -skew-x-12"><span class="inline-block skew-x-12">布局1</span></span>
          <span class="ml-[2px] w-[31px] leading-[12px] text-center border-r border-[#666] -skew-x-12"><span class="inline-block skew-x-12">布局2</span></span>
          <div class="ml-[437px] w-[292px] h-[12px] bg-white border-l border-[#ccc] flex items-center justify-between">
            <i class="w-[11px] h-[11px] bg-[#c5d6ef] rounded-[2px] flex items-center justify-center ml-[5px]"><svg class="w-[10px] h-[10px] rotate-90"><use href="#dn"/></svg></i>
            <i class="w-[10px] h-[11px] bg-[#c5d6ef] rounded-[2px] flex items-center justify-center"><svg class="w-[10px] h-[10px] -rotate-90"><use href="#dn"/></svg></i>
          </div>
        </div>
      </div>

      <!-- right tools -->
      <div class="w-[27px] bg-[#5e5e5e] pl-[4px]">
        <div class="w-[18px] h-[299px] bg-[#f0f0ee]">
          <div class="h-[6px] bg-[#777] border-y border-[#555]"></div>
          <div class="flex flex-col items-center pt-[1px]">
            <svg class="w-[16px] h-[16px]"><use href="#er"/></svg><svg class="w-[16px] h-[16px]"><use href="#co"/></svg><svg class="w-[16px] h-[16px]"><use href="#mi"/></svg><svg class="w-[16px] h-[16px]"><use href="#of"/></svg><svg class="w-[16px] h-[16px]"><use href="#ar2"/></svg><svg class="w-[16px] h-[16px]"><use href="#mv"/></svg><svg class="w-[16px] h-[16px]"><use href="#ro"/></svg><svg class="w-[16px] h-[16px]"><use href="#sc"/></svg><svg class="w-[16px] h-[16px]"><use href="#st"/></svg><svg class="w-[16px] h-[16px]"><use href="#tr"/></svg><svg class="w-[16px] h-[16px]"><use href="#ex"/></svg><svg class="w-[16px] h-[16px]"><use href="#bk"/></svg><svg class="w-[16px] h-[16px]"><use href="#bk2"/></svg><svg class="w-[16px] h-[16px]"><use href="#jn"/></svg><svg class="w-[16px] h-[16px]"><use href="#cf"/></svg><svg class="w-[16px] h-[16px]"><use href="#fl"/></svg><svg class="w-[16px] h-[16px]"><use href="#bl"/></svg><svg class="w-[16px] h-[16px]"><use href="#bx"/></svg>
          </div>
        </div>
        <div class="w-[18px] h-[97px] bg-[#f0f0ee]">
          <div class="h-[6px] bg-[#555]"></div>
          <div class="flex flex-col items-center pt-[1px]">
            <svg class="w-[16px] h-[16px]"><use href="#dr1"/></svg><svg class="w-[16px] h-[16px]"><use href="#dr2"/></svg><svg class="w-[16px] h-[16px]"><use href="#dr1"/></svg><svg class="w-[16px] h-[16px]"><use href="#dr2"/></svg><i class="w-[14px] h-px bg-[#aaa] my-[3px]"></i><svg class="w-[16px] h-[15px]"><use href="#abc"/></svg><svg class="w-[16px] h-[15px]"><use href="#dr2"/></svg>
          </div>
        </div>
      </div>
    </div>

    <!-- command -->
    <div class="h-[40px] flex">
      <div class="w-[16px] bg-[#4f4f4f] flex flex-col items-center text-white">
        <i class="w-[12px] h-[4px] mt-[2px] border-y border-dotted border-[#999]"></i>
        <span class="text-[13px] leading-[15px] mt-[2px] font-bold">×</span>
        <svg class="w-[11px] h-[11px] mt-[2px]" viewBox="0 0 11 11"><path d="M1 10l5-5a3 3 0 0 1 4-3L8 4l1 1 2-2a3 3 0 0 1-4 4l-4 4z" fill="#fff"/></svg>
      </div>
      <div class="flex-1 flex flex-col">
        <div class="h-[24px] bg-[#b8b8b8] border-t-2 border-[#666] pl-[2px] flex items-center text-[9.650px] text-[#222] [font-family:'Liberation_Mono','Noto_Sans_CJK_SC',monospace] whitespace-pre">命令: '_-view 输入选项 [?/删除(D)/正交(O)/恢复(R)/保存(S)/设置(E)/窗口(W)]: _right 正在重生成模型。</div>
        <div class="h-[16px] bg-white flex items-center pl-[2px] text-[9.500px] italic text-[#999]">
          <i class="w-[10px] h-[10px] bg-[#d8dfea] border border-[#889] text-[6px] leading-[8px] text-[#335] not-italic mr-[2px]">&gt;_</i><span class="text-[6px] not-italic mr-[10px]">▾</span>键入命令
        </div>
      </div>
    </div>
  </div>
</main>

<!-- Status -->
<footer class="h-[20px] bg-gradient-to-b from-[#6a6a6a] via-[#9a9a9a] to-[#5c5c5c] flex items-center text-[9px] text-[#222] relative border-t border-[#444]">
  <span class="ml-[7px] w-[57px] whitespace-nowrap [font-family:'Liberation_Mono','Noto_Sans_CJK_SC',monospace] text-[#111] text-[9.500px]">比例 1:100 ▾</span>
  <span class="ml-[7px] w-[94px] whitespace-nowrap [font-family:'Liberation_Mono',monospace] text-[8px] tracking-[-.35px] text-[#333]">32790, 2640, 0</span>
  <div class="flex items-center gap-[1px]">
    <i class="w-[15px] h-[17px] bg-[#b5b5b5] flex items-center justify-center"><svg class="w-[13px] h-[13px]" viewBox="0 0 13 13"><path d="M6 1v11M1 6h11" stroke="#222" stroke-width="1.500"/><rect x="4" y="4" width="4" height="4" fill="#222"/></svg></i>
    <i class="w-[15px] h-[17px] bg-[#b5b5b5] flex items-center justify-center"><svg class="w-[12px] h-[12px]" viewBox="0 0 12 12"><path d="M2 2h8v8H2z" fill="none" stroke="#555" stroke-dasharray="1 1"/></svg></i>
    <i class="w-[15px] h-[17px] bg-[#b5b5b5] flex items-center justify-center"><svg class="w-[13px] h-[13px]"><use href="#grid"/></svg></i>
    <i class="w-[15px] h-[17px] bg-[#b5b5b5] flex items-center justify-center"><svg class="w-[12px] h-[12px]" viewBox="0 0 12 12"><path d="M2 1v10h9" fill="none" stroke="#222"/></svg></i>
    <i class="w-[15px] h-[17px] bg-[#b5b5b5] flex items-center justify-center"><svg class="w-[12px] h-[12px]" viewBox="0 0 12 12"><circle cx="6" cy="6" r="4" fill="none" stroke="#222"/><path d="M1 11L11 3" stroke="#222"/></svg></i>
    <i class="w-[15px] h-[17px] bg-[#b5b5b5] flex items-center justify-center"><svg class="w-[12px] h-[12px]" viewBox="0 0 12 12"><rect x="2" y="2" width="8" height="8" fill="#fff" stroke="#222"/><circle cx="2" cy="2" r="1.500" fill="#e88"/></svg></i>
    <i class="w-[15px] h-[17px] bg-[#b5b5b5] flex items-center justify-center"><svg class="w-[12px] h-[12px]" viewBox="0 0 12 12"><path d="M3 1h7v8l-2 2H2z" fill="#ddd" stroke="#222"/><circle cx="2" cy="10" r="1.500" fill="#e88"/></svg></i>
    <i class="w-[15px] h-[17px] bg-[#a9d2ea] flex items-center justify-center"><svg class="w-[12px] h-[12px]" viewBox="0 0 12 12"><path d="M11 11H1L9 2" fill="none" stroke="#222"/></svg></i>
    <i class="w-[15px] h-[17px] bg-[#a9d2ea] flex items-center justify-center"><svg class="w-[12px] h-[12px]" viewBox="0 0 12 12"><path d="M1 11V2M1 11h10M2 9l7-7" stroke="#222"/><path d="M8 1l3 1-1 3" fill="#da3"/></svg></i>
    <i class="w-[15px] h-[17px] bg-[#a9d2ea] flex items-center justify-center"><svg class="w-[12px] h-[12px]" viewBox="0 0 12 12"><path d="M1 7h10M4 5v4M7 5v4" stroke="#222"/></svg></i>
    <i class="w-[15px] h-[17px] bg-[#b5b5b5] flex items-center justify-center"><svg class="w-[12px] h-[12px]" viewBox="0 0 12 12"><path d="M6 1v10M1 5h10" stroke="#111" stroke-width="1.300"/></svg></i>
    <i class="w-[15px] h-[17px] bg-[#a9d2ea] flex items-center justify-center"><svg class="w-[13px] h-[13px]" viewBox="0 0 13 13"><rect x="1" y="1" width="11" height="11" fill="#8fb9dc" stroke="#466"/></svg></i>
    <i class="w-[15px] h-[17px] bg-[#b5b5b5] flex items-center justify-center"><svg class="w-[12px] h-[12px]" viewBox="0 0 12 12"><rect x="3" y="1" width="6" height="10" fill="#eee" stroke="#222"/></svg></i>
    <i class="w-[15px] h-[17px] bg-[#b5b5b5] flex items-center justify-center"><svg class="w-[12px] h-[12px]" viewBox="0 0 12 12"><path d="M3 1v6h4" stroke="#222" fill="none"/><rect x="6" y="6" width="5" height="5" fill="#6a3"/></svg></i>
    <i class="w-[15px] h-[17px] bg-[#b5b5b5] flex items-center justify-center"><svg class="w-[12px] h-[12px]" viewBox="0 0 12 12"><path d="M4 1h4v3h3v4H8v3H4V8H1V4h3z" fill="#fff" stroke="#555"/></svg></i>
  </div>
  <div class="absolute left-[615px] top-[1px] flex items-center h-[17px] text-[10px] text-[#111]">
    <span class="w-[20px] bg-[#b5b5b5] h-[17px] leading-[17px] text-center text-[9.500px]">模型</span>
    <svg class="w-[14px] h-[14px] ml-[3px]" viewBox="0 0 14 14"><rect x="2" y="2" width="10" height="8" fill="#ddd" stroke="#333"/><path d="M1 12h12" stroke="#333"/></svg>
    <svg class="w-[14px] h-[14px] ml-[3px]" viewBox="0 0 14 14"><rect x="1" y="2" width="5" height="5" fill="#ddd" stroke="#333"/><rect x="8" y="2" width="5" height="5" fill="#ddd" stroke="#333"/><path d="M1 11h12" stroke="#333"/></svg>
    <svg class="w-[14px] h-[14px] ml-[15px]" viewBox="0 0 14 14"><path d="M7 1v7M7 8l-6 5M7 8l6 5" stroke="#111" fill="none"/></svg>
    <span class="ml-[1px] w-[22px] whitespace-nowrap [font-family:'Liberation_Mono',monospace] text-[9px] text-[#222]">1:1▾</span>
    <svg class="w-[14px] h-[14px] ml-[4px]" viewBox="0 0 14 14"><path d="M7 1v7M7 8l-6 5M7 8l6 5" stroke="#222" fill="none"/><circle cx="10" cy="4" r="2" fill="#ea3"/></svg>
    <svg class="w-[14px] h-[14px] ml-[1px] opacity-50" viewBox="0 0 14 14"><path d="M7 1v7M7 8l-6 5M7 8l6 5" stroke="#222" fill="none"/></svg>
    <i class="w-[5px]"></i>
    <svg class="w-[14px] h-[14px] ml-[3px]"><use href="#gear"/></svg>
    <svg class="w-[14px] h-[14px] ml-[5px]" viewBox="0 0 14 14"><rect x="1" y="6" width="8" height="7" fill="#ddd" stroke="#222"/><path d="M7 6V3a3 3 0 0 1 6 0v2" fill="none" stroke="#222"/></svg>
    <svg class="w-[12px] h-[12px] ml-[3px]" viewBox="0 0 12 12"><circle cx="6" cy="6" r="5" fill="#aaa"/><path d="M3 3l3 3 2-1" stroke="#fff" fill="none"/></svg>
    <span class="ml-[4px] w-[21px] bg-[#a9d2ea] h-[17px] leading-[17px] text-center text-[9.500px]">编组</span>
    <span class="ml-[1px] w-[22px] bg-[#b5b5b5] h-[17px] leading-[17px] text-center text-[9.500px]">基线</span>
    <span class="ml-[1px] w-[21px] bg-[#b5b5b5] h-[17px] leading-[17px] text-center text-[9.500px]">填充</span>
    <span class="ml-[1px] w-[20px] bg-[#a9d2ea] h-[17px] leading-[17px] text-center text-[9.500px]">加粗</span>
    <span class="ml-[1px] w-[38px] bg-[#b5b5b5] h-[17px] leading-[17px] text-center text-[9.500px] whitespace-nowrap">动态标注</span>
    <span class="ml-[6px] w-[21px] h-[15px] bg-[#777] flex items-center justify-center"><svg class="w-[12px] h-[13px]"><use href="#bulb"/></svg></span>
    <span class="ml-[3px] text-[8px] text-[#111]">▾</span>
    <svg class="w-[14px] h-[14px] ml-[2px]" viewBox="0 0 14 14"><rect x="1.500" y="2" width="11" height="10" fill="#ddd" stroke="#222"/><rect x="1.500" y="2" width="11" height="2" fill="#556"/></svg>
    <svg class="w-[9px] h-[9px] ml-[4px]" viewBox="0 0 9 9"><path d="M7 1h1v1H7zM5 3h1v1H5zM7 3h1v1H7zM3 5h1v1H3zM5 5h1v1H5zM7 5h1v1H7z" fill="#ccc"/></svg>
  </div>
</footer>

<!-- overlays: orange badge and watermark -->
<div class="absolute left-[986px] top-[409px] w-[30px] h-[30px] rounded-full bg-[#e0792f] border border-[#b9621f] text-[9px] font-bold text-[#f7dcc0] pl-[4px] leading-[28px]">64</div>
<svg class="absolute left-[825px] top-[431px] w-[60px] h-[48px]" viewBox="0 0 60 48">
  <g fill="#cfcfcf" fill-opacity=".88"><ellipse cx="9" cy="20" rx="5.500" ry="7" transform="rotate(-15 9 20)"/><ellipse cx="23" cy="10" rx="6.500" ry="9"/><ellipse cx="38" cy="11" rx="6.500" ry="9"/><ellipse cx="51" cy="22" rx="6" ry="7.500" transform="rotate(15 51 22)"/><path d="M30 23c6 0 9 5 13 8s3 9-4 9c-4 0-6-1-9-1s-5 1-9 1c-7 0-8-6-4-9s7-8 13-8z"/></g>
</svg>
<div class="absolute left-[768px] top-[451px] text-[39px] leading-[38px] whitespace-nowrap text-white/75 font-bold [font-family:'Liberation_Sans',sans-serif] [-webkit-text-stroke:1px_#bbb]">Bai</div>
<div class="absolute left-[837px] top-[460px] text-[30px] leading-[30px] whitespace-nowrap text-white/80 font-bold [font-family:'Liberation_Sans',sans-serif] [-webkit-text-stroke:1px_#bbb]">du</div>
<div class="absolute left-[883px] top-[460px] text-[31px] leading-[30px] whitespace-nowrap text-white/75 font-bold [font-family:'Noto_Sans_CJK_SC',sans-serif]">经验</div>
<div class="absolute left-[768px] top-[491px] text-[22.500px] leading-[26px] whitespace-nowrap text-white/70 [font-family:'Liberation_Sans',sans-serif] [-webkit-text-stroke:.5px_#aaa]">jingyan.baidu.com</div>
</body></html>
